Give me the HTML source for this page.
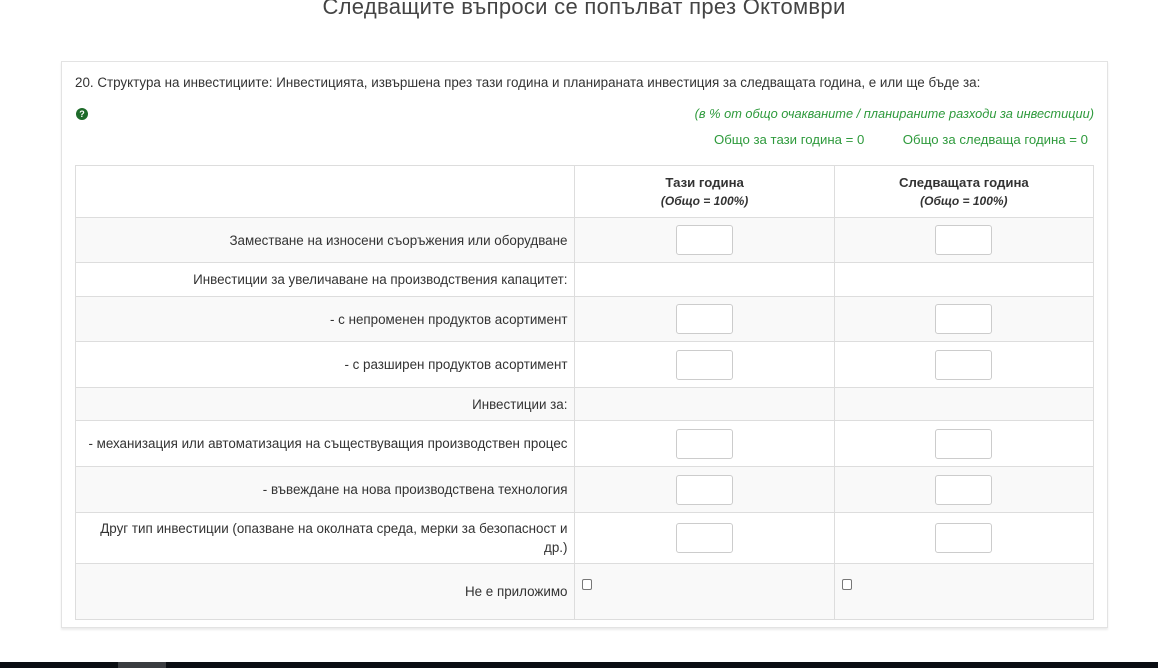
<!DOCTYPE html>
<html><head><meta charset="utf-8"><style>
*{box-sizing:border-box}
body{margin:0;width:1158px;height:668px;overflow:hidden;background:#fff;font-family:"Liberation Sans",sans-serif;color:#333;position:relative}
.title{position:absolute;left:0;width:1168px;top:-6px;text-align:center;font-size:22px;color:#444;letter-spacing:0.3px}
.panel{position:absolute;left:61px;top:61px;width:1047px;height:567px;border:1px solid #e3e3e3;box-shadow:0 2px 2px rgba(0,0,0,.08)}
.q{position:absolute;left:75px;top:75px;font-size:13.4px;color:#333;white-space:nowrap}
.help{position:absolute;left:76px;top:108px;width:12px;height:12px;border-radius:50%;background:#1e6b2a;color:#fff;font-size:9px;font-weight:bold;text-align:center;line-height:12px}
.g{position:absolute;color:#2e9a3c;font-size:13.2px;white-space:nowrap}
table{position:absolute;left:75px;top:165px;width:1019px;border-collapse:collapse;font-size:13.4px}
td{border:1px solid #ddd;padding:0 7px;vertical-align:middle}
td.l{text-align:right;width:499px}
td.c{width:259px;text-align:center}
tr.s td{background:#f9f9f9}
th{border:1px solid #ddd;font-weight:bold;font-size:13.2px;text-align:center;line-height:18px;color:#333}
.in{display:inline-block;width:57px;height:30px;border:1px solid #ccc;border-radius:3px;background:#fff;vertical-align:middle}
.cb{position:absolute;width:10px;height:11px;border:1px solid #777;border-radius:2px;background:#fff}
.bar{position:absolute;left:0;top:662px;width:1158px;height:6px;background:#0a0d12}
.bar2{position:absolute;left:118px;top:662px;width:48px;height:6px;background:#3a3c40}
</style></head><body>
<div class="title">Следващите въпроси се попълват през Октомври</div>
<div class="panel"></div>
<div class="q">20. Структура на инвестициите: Инвестицията, извършена през тази година и планираната инвестиция за следващата година, е или ще бъде за:</div>
<div class="help">?</div>
<div class="g" style="right:64px;top:106px;font-style:italic;font-size:12.8px">(в % от общо очакваните / планираните разходи за инвестиции)</div>
<div class="g" style="left:714px;top:132px">Общо за тази година = 0</div>
<div class="g" style="right:70px;top:132px">Общо за следваща година = 0</div>
<table>
<tr style="height:52px"><td class="l" style="background:#fff"></td><th>Тази година<br><i style="font-size:12px">(Общо = 100%)</i></th><th>Следващата година<br><i style="font-size:12px">(Общо = 100%)</i></th></tr>
<tr class="s" style="height:45px"><td class="l">Заместване на износени съоръжения или оборудване</td><td class="c"><span class="in"></span></td><td class="c"><span class="in"></span></td></tr>
<tr style="height:34px"><td class="l">Инвестиции за увеличаване на производствения капацитет:</td><td></td><td></td></tr>
<tr class="s" style="height:45px"><td class="l">- с непроменен продуктов асортимент</td><td class="c"><span class="in"></span></td><td class="c"><span class="in"></span></td></tr>
<tr style="height:46px"><td class="l">- с разширен продуктов асортимент</td><td class="c"><span class="in"></span></td><td class="c"><span class="in"></span></td></tr>
<tr class="s" style="height:33px"><td class="l">Инвестиции за:</td><td></td><td></td></tr>
<tr style="height:46px"><td class="l">- механизация или автоматизация на съществуващия производствен процес</td><td class="c"><span class="in"></span></td><td class="c"><span class="in"></span></td></tr>
<tr class="s" style="height:46px"><td class="l">- въвеждане на нова производствена технология</td><td class="c"><span class="in"></span></td><td class="c"><span class="in"></span></td></tr>
<tr style="height:51px"><td class="l" style="line-height:19px">Друг тип инвестиции (опазване на околната среда, мерки за безопасност и<br>др.)</td><td class="c"><span class="in"></span></td><td class="c"><span class="in"></span></td></tr>
<tr class="s" style="height:56px"><td class="l">Не е приложимо</td><td></td><td></td></tr>
</table>
<div class="cb" style="left:582px;top:579px"></div>
<div class="cb" style="left:842px;top:579px"></div>
<div class="bar"></div><div class="bar2"></div>
</body></html>
